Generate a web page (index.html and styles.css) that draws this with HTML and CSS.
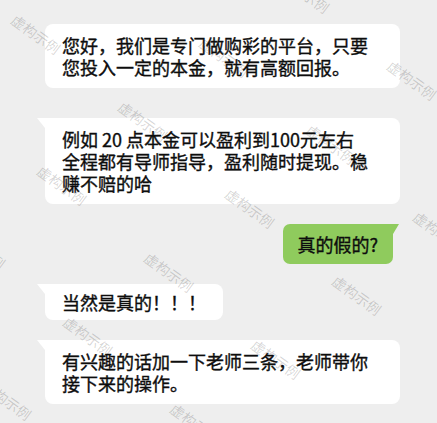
FILE: index.html
```html
<!DOCTYPE html>
<html lang="zh-CN">
<head>
<meta charset="utf-8">
<title>聊天记录</title>
<link rel="stylesheet" href="styles.css">
</head>
<body>
<main class="chat">
  <div class="msg msg--in msg--lead">
    <div class="bubble">您好，我们是专门做购彩的平台，只要您投入一定的本金，就有高额回报。</div>
  </div>
  <div class="msg msg--in">
    <div class="bubble bubble--tail">例如 20 点本金可以盈利到100元左右<br>全程都有导师指导，盈利随时提现。稳赚不赔的哈</div>
  </div>
  <div class="msg msg--out">
    <div class="bubble bubble--out">真的假的?</div>
  </div>
  <div class="msg msg--in">
    <div class="bubble bubble--tail bubble--short">当然是真的！！！</div>
  </div>
  <div class="msg msg--in">
    <div class="bubble bubble--tail">有兴趣的话加一下老师三条，老师带你接下来的操作。</div>
  </div>
</main>
<div class="watermarks" id="watermarks" aria-hidden="true"></div>
<script src="script.js"></script>
</body>
</html>
```

FILE: styles.css
```css
html, body {
  margin: 0;
  padding: 0;
}

body {
  width: 437px;
  height: 423px;
  overflow: hidden;
  position: relative;
  background: #eeeeee;
  font-family: "Noto Sans CJK SC", "Noto Sans", sans-serif;
}

.chat {
  display: flex;
  flex-direction: column;
  gap: 20px;
  padding: 24px 0 0 45px;
}

.msg {
  display: flex;
}

.msg--in {
  justify-content: flex-start;
}

.msg--out {
  justify-content: flex-end;
  padding-right: 44px;
}

.msg--lead {
  margin-bottom: 10px;
}

.bubble {
  position: relative;
  box-sizing: border-box;
  max-width: 355px;
  padding: 10px 17px;
  background: #ffffff;
  border-radius: 8px;
  font-size: 18px;
  line-height: 22px;
  color: #0d0d0d;
  -webkit-text-stroke: 0.35px #0d0d0d;
}

.bubble--short {
  padding: 7px 17px;
}

.bubble--tail {
  border-top-left-radius: 0;
}

.bubble--tail::before {
  content: "";
  position: absolute;
  left: -8px;
  top: 0;
  width: 0;
  height: 0;
  border-top: 10px solid #ffffff;
  border-left: 8px solid transparent;
}

.bubble--out {
  background: #8fcb5d;
  padding: 9px 15px 9px 14px;
  border-radius: 7px;
  border-top-right-radius: 0;
}

.bubble--out::after {
  content: "";
  position: absolute;
  right: -6px;
  top: 0;
  width: 0;
  height: 0;
  border-top: 10px solid #8fcb5d;
  border-right: 6px solid transparent;
}

.watermarks {
  position: absolute;
  inset: 0;
  overflow: hidden;
  pointer-events: none;
}

.wm {
  position: absolute;
  transform: translate(-50%, -50%) rotate(36deg);
  font-size: 14px;
  line-height: 1;
  white-space: nowrap;
  color: rgba(0, 0, 0, 0.17);
}
```

FILE: script.js
```js
(function () {
  var wrap = document.getElementById('watermarks');
  var ox = 36, oy = 34;
  var h = [188, 23];
  var d = [107, 87];
  for (var j = -3; j <= 8; j++) {
    for (var i = -5; i <= 5; i++) {
      var x = ox + i * h[0] + j * d[0];
      var y = oy + i * h[1] + j * d[1];
      if (x > -60 && x < 500 && y > -40 && y < 470) {
        var s = document.createElement('span');
        s.className = 'wm';
        s.textContent = '虚构示例';
        s.style.left = x + 'px';
        s.style.top = y + 'px';
        wrap.appendChild(s);
      }
    }
  }
})();
```
